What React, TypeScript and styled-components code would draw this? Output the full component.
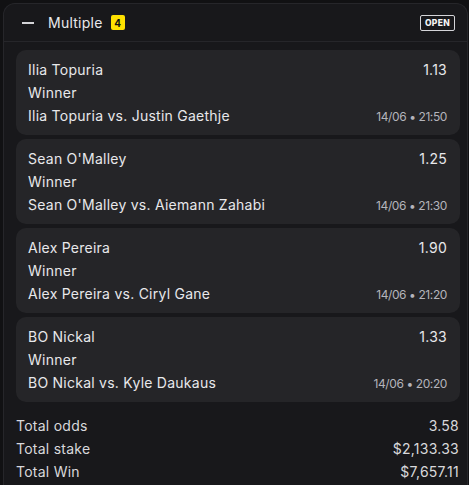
import React from "react";
import styled, { createGlobalStyle } from "styled-components";

const Global = createGlobalStyle`
  html, body { margin: 0; padding: 0; background: #111113; }
  body { font-family: Inter, "Open Sans", sans-serif; color: #e4e4e7; }
`;

const Panel = styled.section`
  margin: 3px 1px 0 3px;
  background: #18181b;
  border: 1px solid #26262a;
  border-bottom: none;
  border-radius: 12px 12px 0 0;
  height: 482px;
  box-sizing: border-box;
  overflow: hidden;
`;

const Header = styled.header`
  display: flex;
  align-items: center;
  height: 37px;
  padding: 0 12px 0 18px;
  border-bottom: 1px solid #26262a;
`;

const Minus = styled.span`
  width: 12px;
  height: 2px;
  background: #d4d4d8;
  margin-right: 14px;
  margin-top: 1px;
`;

const Title = styled.span`
  font-size: 14px;
  letter-spacing: 0.25px;
  color: #e8e8eb;
`;

const Count = styled.span`
  margin-left: 8px;
  width: 14px;
  height: 15px;
  background: #ffe100;
  color: #111;
  font-size: 10px;
  font-weight: 700;
  display: inline-flex;
  align-items: center;
  justify-content: center;
  border-radius: 2px;
`;

const Status = styled.span`
  margin-left: auto;
  border: 1px solid #d4d4d8;
  border-radius: 2px;
  height: 16px;
  box-sizing: border-box;
  padding: 0 4px;
  display: inline-flex;
  align-items: center;
  font-size: 8.5px;
  font-weight: 800;
  color: #f4f4f5;
  letter-spacing: 0.3px;
`;

const Body = styled.div`
  padding: 8px 7px 0 12px;
  display: flex;
  flex-direction: column;
  gap: 4px;
`;

const Card = styled.div`
  background: #252528;
  border-radius: 10px;
  padding: 8px 13px 8px 12px;
  display: flex;
  flex-direction: column;
`;

const Row = styled.div`
  display: flex;
  justify-content: space-between;
  align-items: baseline;
  height: 23px;
  line-height: 23px;
  font-size: 14px;
  letter-spacing: 0.25px;
  color: #e8e8eb;
`;

const Time = styled.span`
  font-size: 12px;
  letter-spacing: -0.4px;
  color: #b4b4bb;
`;

const Totals = styled.div`
  margin-top: 8px;
  padding-right: 1px;
  display: flex;
  flex-direction: column;
`;

const TotalRow = styled(Row)`
  color: #d8d8dc;
`;

const bets = [
  { name: "Ilia Topuria", odds: "1.13", match: "Ilia Topuria vs. Justin Gaethje", time: "14/06 • 21:50" },
  { name: "Sean O'Malley", odds: "1.25", match: "Sean O'Malley vs. Aiemann Zahabi", time: "14/06 • 21:30" },
  { name: "Alex Pereira", odds: "1.90", match: "Alex Pereira vs. Ciryl Gane", time: "14/06 • 21:20" },
  { name: "BO Nickal", odds: "1.33", match: "BO Nickal vs. Kyle Daukaus", time: "14/06 • 20:20" },
];

export default function App() {
  return (
    <>
      <Global />
      <Panel>
        <Header>
          <Minus />
          <Title>Multiple</Title>
          <Count>4</Count>
          <Status>OPEN</Status>
        </Header>
        <Body>
          {bets.map((b) => (
            <Card key={b.name}>
              <Row>
                <span>{b.name}</span>
                <span>{b.odds}</span>
              </Row>
              <Row>
                <span>Winner</span>
              </Row>
              <Row>
                <span>{b.match}</span>
                <Time>{b.time}</Time>
              </Row>
            </Card>
          ))}
          <Totals>
            <TotalRow>
              <span>Total odds</span>
              <span>3.58</span>
            </TotalRow>
            <TotalRow>
              <span>Total stake</span>
              <span>$2,133.33</span>
            </TotalRow>
            <TotalRow>
              <span>Total Win</span>
              <span>$7,657.11</span>
            </TotalRow>
          </Totals>
        </Body>
      </Panel>
    </>
  );
}
